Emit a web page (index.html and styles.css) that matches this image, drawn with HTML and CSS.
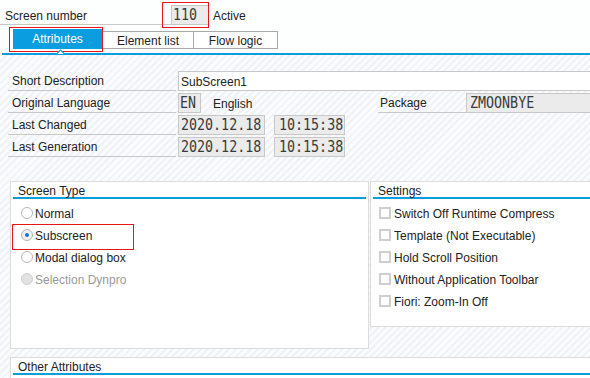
FILE: index.html
```html
<!DOCTYPE html>
<html>
<head>
<meta charset="utf-8">
<link rel="stylesheet" href="styles.css">
</head>
<body>
<div class="top">
  <div class="head">
    <div class="head-label">Screen number</div>
    <div class="fld num"><span class="mono">110</span></div>
    <div class="status">Active</div>
    <div class="mark mark-num"></div>
  </div>
  <div class="tabs">
    <div class="tab active">Attributes</div>
    <div class="tab">Element list</div>
    <div class="tab last">Flow logic</div>
    <div class="mark mark-tab"></div>
  </div>
  <div class="tabline">
    <svg class="caret" width="9" height="5" viewBox="0 0 9 5"><polyline points="0.5,5 4.5,1 8.5,5" fill="#fff" stroke="#0a9de0" stroke-width="1.2"/></svg>
  </div>
</div>

<div class="attrs">
  <div class="row">
    <div class="lbl">Short Description</div>
    <div class="fld wide white">SubScreen1</div>
  </div>
  <div class="row">
    <div class="row-left">
      <div class="lbl">Original Language</div>
      <div class="fld lang"><span class="mono">EN</span></div>
      <div class="plain">English</div>
    </div>
    <div class="lbl pkg">Package</div>
    <div class="fld wide pkg-fld"><span class="mono">ZMOONBYE</span></div>
  </div>
  <div class="row">
    <div class="lbl">Last Changed</div>
    <div class="fld date"><span class="mono">2020.12.18</span></div>
    <div class="fld time"><span class="mono">10:15:38</span></div>
  </div>
  <div class="row">
    <div class="lbl">Last Generation</div>
    <div class="fld date"><span class="mono">2020.12.18</span></div>
    <div class="fld time"><span class="mono">10:15:38</span></div>
  </div>
</div>

<div class="groups">
  <div class="box type">
    <div class="box-title">Screen Type</div>
    <div class="opts">
      <div class="opt"><span class="radio"></span>Normal</div>
      <div class="opt"><span class="radio on"></span>Subscreen</div>
      <div class="opt"><span class="radio"></span>Modal dialog box</div>
      <div class="opt disabled"><span class="radio"></span>Selection Dynpro</div>
    </div>
    <div class="mark mark-sub"></div>
  </div>
  <div class="box settings">
    <div class="box-title">Settings</div>
    <div class="opts checks">
      <div class="opt"><span class="check"></span>Switch Off Runtime Compress</div>
      <div class="opt"><span class="check"></span>Template (Not Executable)</div>
      <div class="opt"><span class="check"></span>Hold Scroll Position</div>
      <div class="opt"><span class="check"></span>Without Application Toolbar</div>
      <div class="opt"><span class="check"></span>Fiori: Zoom-In Off</div>
    </div>
  </div>
</div>

<div class="box other">
  <div class="box-title">Other Attributes</div>
</div>
</body>
</html>
```

FILE: styles.css
```css
* { box-sizing: border-box; }
html, body { margin: 0; padding: 0; }
body {
  width: 590px;
  height: 378px;
  overflow: hidden;
  font-family: "Liberation Sans", Arial, sans-serif;
  font-size: 12px;
  color: #222;
  background: repeating-linear-gradient(135deg, #fafbfc 0 3px, #f0f2f5 3px 5px);
}

.top { background: #fdfefe; height: 55px; }

.head {
  position: relative;
  display: flex;
  align-items: flex-start;
  height: 29px;
  padding-top: 5px;
}
.head-label {
  width: 171px;
  height: 20px;
  padding: 3px 0 0 5px;
  line-height: 16px;
  border-bottom: 1px solid #c8c8c8;
}
.status { margin-left: 4px; line-height: 22px; }

.mark {
  position: absolute;
  border: 1px solid #e8141b;
  pointer-events: none;
}
.mark-num { left: 162px; top: 2px; width: 47px; height: 26px; }
.mark-tab { left: -4px; top: -2px; width: 94px; height: 25px; }
.mark-sub { left: 1px; top: 42px; width: 122px; height: 26px; }

.fld {
  height: 20px;
  border: 1px solid #c8c8c8;
  background: #ebebeb;
  line-height: 19px;
  white-space: nowrap;
  overflow: hidden;
}
.mono {
  display: inline-block;
  font-family: "DejaVu Sans Mono", "Liberation Mono", monospace;
  font-size: 16px;
  color: #3a3a3a;
  transform: scaleX(0.833);
  transform-origin: 0 50%;
  line-height: 18px;
}
.num { width: 38px; padding-left: 1px; }

.tabs {
  position: relative;
  display: flex;
  align-items: flex-end;
  margin-left: 13px;
  height: 20px;
}
.tab {
  height: 18px;
  border: 1px solid #a9a9a9;
  background: #fff;
  text-align: center;
  line-height: 18px;
}
.tab.active {
  width: 89px;
  height: 20px;
  border: none;
  background: #0a9de0;
  color: #fff;
  line-height: 21px;
}
.tab:nth-child(2) { width: 92px; }
.tab.last { width: 84px; border-left: none; }

.tabline {
  position: relative;
  margin: 4px 0 0 2px;
  height: 2px;
  background: #0a9de0;
}
.caret { position: absolute; left: 54px; top: -4px; }

.attrs {
  display: flex;
  flex-direction: column;
  gap: 2px;
  margin-top: 16px;
}
.row {
  display: flex;
  height: 20px;
  padding-left: 8px;
}
.row-left { display: flex; width: 370px; }
.lbl {
  width: 168px;
  flex: none;
  padding-left: 4px;
  padding-top: 2px;
  line-height: 17px;
  border-bottom: 1px solid #c8c8c8;
}
.row .fld { margin-left: 2px; }
.wide { flex: 1; margin-right: -3px; }
.white { background: #fff; padding-left: 2px; line-height: 20px; }
.lang { width: 23px; padding-left: 1px; }
.plain { margin-left: 12px; line-height: 22px; }
.lbl.pkg { width: 88px; padding-left: 2px; }
.row .pkg-fld { margin-left: 0; padding-left: 3px; }
.date { width: 87px; padding-left: 2px; }
.row .time { width: 71px; margin-left: 9px; padding-left: 4px; }

.groups {
  display: flex;
  align-items: flex-start;
  padding-left: 10px;
  margin-top: 24px;
}
.box {
  position: relative;
  background: #fff;
  border: 1px solid #dcdcdc;
}
.box.type { width: 359px; height: 168px; flex: none; }
.box.settings { width: 225px; height: 146px; margin-left: 1px; flex: none; }
.box.other { margin: 8px 0 0 10px; width: 600px; height: 40px; }

.box-title {
  margin: 0 2px;
  padding: 2px 0 0 5px;
  height: 17px;
  line-height: 14px;
  border-bottom: 2px solid #0a9de0;
  white-space: nowrap;
}

.opts { padding: 3px 0 0 10px; }
.checks { padding-left: 8px; }
.opt {
  display: flex;
  align-items: center;
  height: 22px;
  white-space: nowrap;
  padding-top: 1px;
}
.opt.disabled { color: #9a9a9a; }

.radio {
  position: relative;
  width: 12px;
  height: 12px;
  border-radius: 50%;
  border: 1px solid #b4b4b4;
  background: #fff;
  margin: -1px 2px 0 0;
  flex: none;
}
.radio.on { background: #f0f0f0; }
.radio.on::after {
  content: "";
  position: absolute;
  left: 3px;
  top: 3px;
  width: 4px;
  height: 4px;
  border-radius: 50%;
  background: #1a78c8;
}
.disabled .radio { background: #e2e2e2; border-color: #cfcfcf; }

.check {
  width: 12px;
  height: 12px;
  border: 2px solid #cfcfcf;
  background: #fff;
  margin: -1px 3px 0 0;
  flex: none;
}
```
